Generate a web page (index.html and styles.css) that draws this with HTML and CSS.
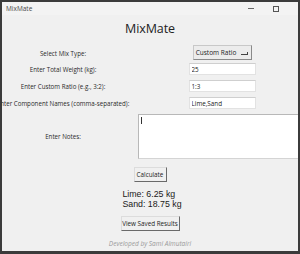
FILE: index.html
```html
<!DOCTYPE html>
<html lang="en">

<head>
    <meta charset="UTF-8">
    <meta name="viewport" content="width=device-width, initial-scale=1.0">
    <title>MixMate</title>
    <link rel="stylesheet" href="styles.css">
</head>

<body>
    <div class="window">
        <div class="titlebar">
            <span class="title">MixMate</span>
            <div class="controls">
                <span class="min"></span>
                <span class="max"></span>
            </div>
        </div>

        <div class="content">
            <h1>MixMate</h1>

            <div class="form">
                <div class="label">Select Mix Type:</div>
                <div class="field">
                    <div class="menu-btn">Custom Ratio <span class="menu-mark"></span></div>
                </div>

                <div class="label">Enter Total Weight (kg):</div>
                <div class="field"><input type="text" value="25"></div>

                <div class="label">Enter Custom Ratio (e.g., 3:2):</div>
                <div class="field"><input type="text" value="1:3"></div>

                <div class="label">Enter Component Names (comma-separated):</div>
                <div class="field"><input type="text" value="Lime,Sand"></div>

                <div class="label">Enter Notes:</div>
                <div class="field notes-field"><div class="notes"><span class="caret"></span></div></div>
            </div>

            <button class="btn calc">Calculate</button>

            <div class="result">
                <div>Lime: 6.25 kg</div>
                <div>Sand: 18.75 kg</div>
            </div>

            <button class="btn saved">View Saved Results</button>

            <div class="footer">Developed by Sami Almutairi</div>
        </div>
    </div>
</body>

</html>
```

FILE: styles.css
```css
* {
    margin: 0;
    padding: 0;
    box-sizing: border-box;
}

body {
    width: 300px;
    height: 254px;
    overflow: hidden;
    font-family: 'Open Sans', sans-serif;
    background-color: #3a3a3a;
}

.window {
    width: 300px;
    height: 254px;
    border: 2px solid #3b3b3b;
    border-bottom-width: 3px;
    background-color: #f0f0f0;
    overflow: hidden;
    display: flex;
    flex-direction: column;
}

.titlebar {
    height: 13px;
    display: flex;
    align-items: center;
    justify-content: space-between;
    background-color: #f3f3f3;
    padding-left: 4px;
}

.title {
    font-size: 6.5px;
    color: #4a4a4a;
}

.controls {
    display: flex;
    align-items: center;
    gap: 19px;
    padding-right: 19px;
}

.min {
    width: 6px;
    height: 1px;
    background-color: #666;
}

.max {
    width: 6px;
    height: 6px;
    border: 1px solid #555;
}

.content {
    flex: 1;
    display: flex;
    flex-direction: column;
    align-items: center;
}

h1 {
    font-size: 12.5px;
    font-weight: 500;
    color: #222;
    margin-top: 6px;
    line-height: 16px;
    letter-spacing: -0.1px;
}

.form {
    width: 296px;
    display: grid;
    grid-template-columns: 122px 174px;
    row-gap: 5px;
    margin-top: 11px;
    align-items: center;
}

.label {
    font-size: 6.2px;
    color: #2a2a2a;
    text-align: center;
    white-space: nowrap;
    display: flex;
    justify-content: center;
}

.field {
    display: flex;
    justify-content: center;
    padding-left: 22px;
}

.notes-field {
    justify-content: flex-start;
    padding-left: 14px;
}

.menu-btn {
    width: 59px;
    height: 15px;
    font-size: 6.5px;
    color: #222;
    background-color: #ececec;
    border: 1px solid #c8c8c8;
    border-right-color: #8a8a8a;
    border-bottom-color: #8a8a8a;
    display: flex;
    align-items: center;
    justify-content: center;
    gap: 5px;
    margin-bottom: -2px;
    margin-top: -3px;
}

.menu-mark {
    width: 7px;
    height: 3px;
    border-right: 1px solid #444;
    border-bottom: 1px solid #444;
    margin-top: 1px;
}

input {
    width: 67px;
    height: 12px;
    font-family: 'Open Sans', sans-serif;
    font-size: 6.3px;
    color: #222;
    padding: 0 2px;
    border: 1px solid #e2e2e2;
    border-top-color: #cfcfcf;
    background: white;
    outline: none;
}

.notes {
    flex: none;
    width: 176px;
    height: 45px;
    background: white;
    border: 1px solid #d4d4d4;
    border-top-color: #b8b8b8;
    border-left-color: #b8b8b8;
    padding: 2px 2px;
}

.caret {
    display: block;
    width: 1px;
    height: 7px;
    background-color: #333;
}

.btn {
    font-family: 'Open Sans', sans-serif;
    font-size: 6.3px;
    color: #222;
    background-color: #f0f0f0;
    border: 1px solid #dcdcdc;
    border-right-color: #6a6a6a;
    border-bottom-color: #6a6a6a;
    height: 15px;
}

.calc {
    width: 33px;
    margin-top: 8px;
}

.result {
    font-family: 'Liberation Sans', Arial, sans-serif;
    font-size: 8.8px;
    line-height: 10px;
    color: #1a1a1a;
    margin-top: 7px;
    padding-left: 4px;
}

.saved {
    width: 59px;
    margin-top: 7px;
}

.footer {
    font-size: 6.5px;
    font-style: italic;
    color: #9a9a9a;
    margin-top: 8px;
}
```
